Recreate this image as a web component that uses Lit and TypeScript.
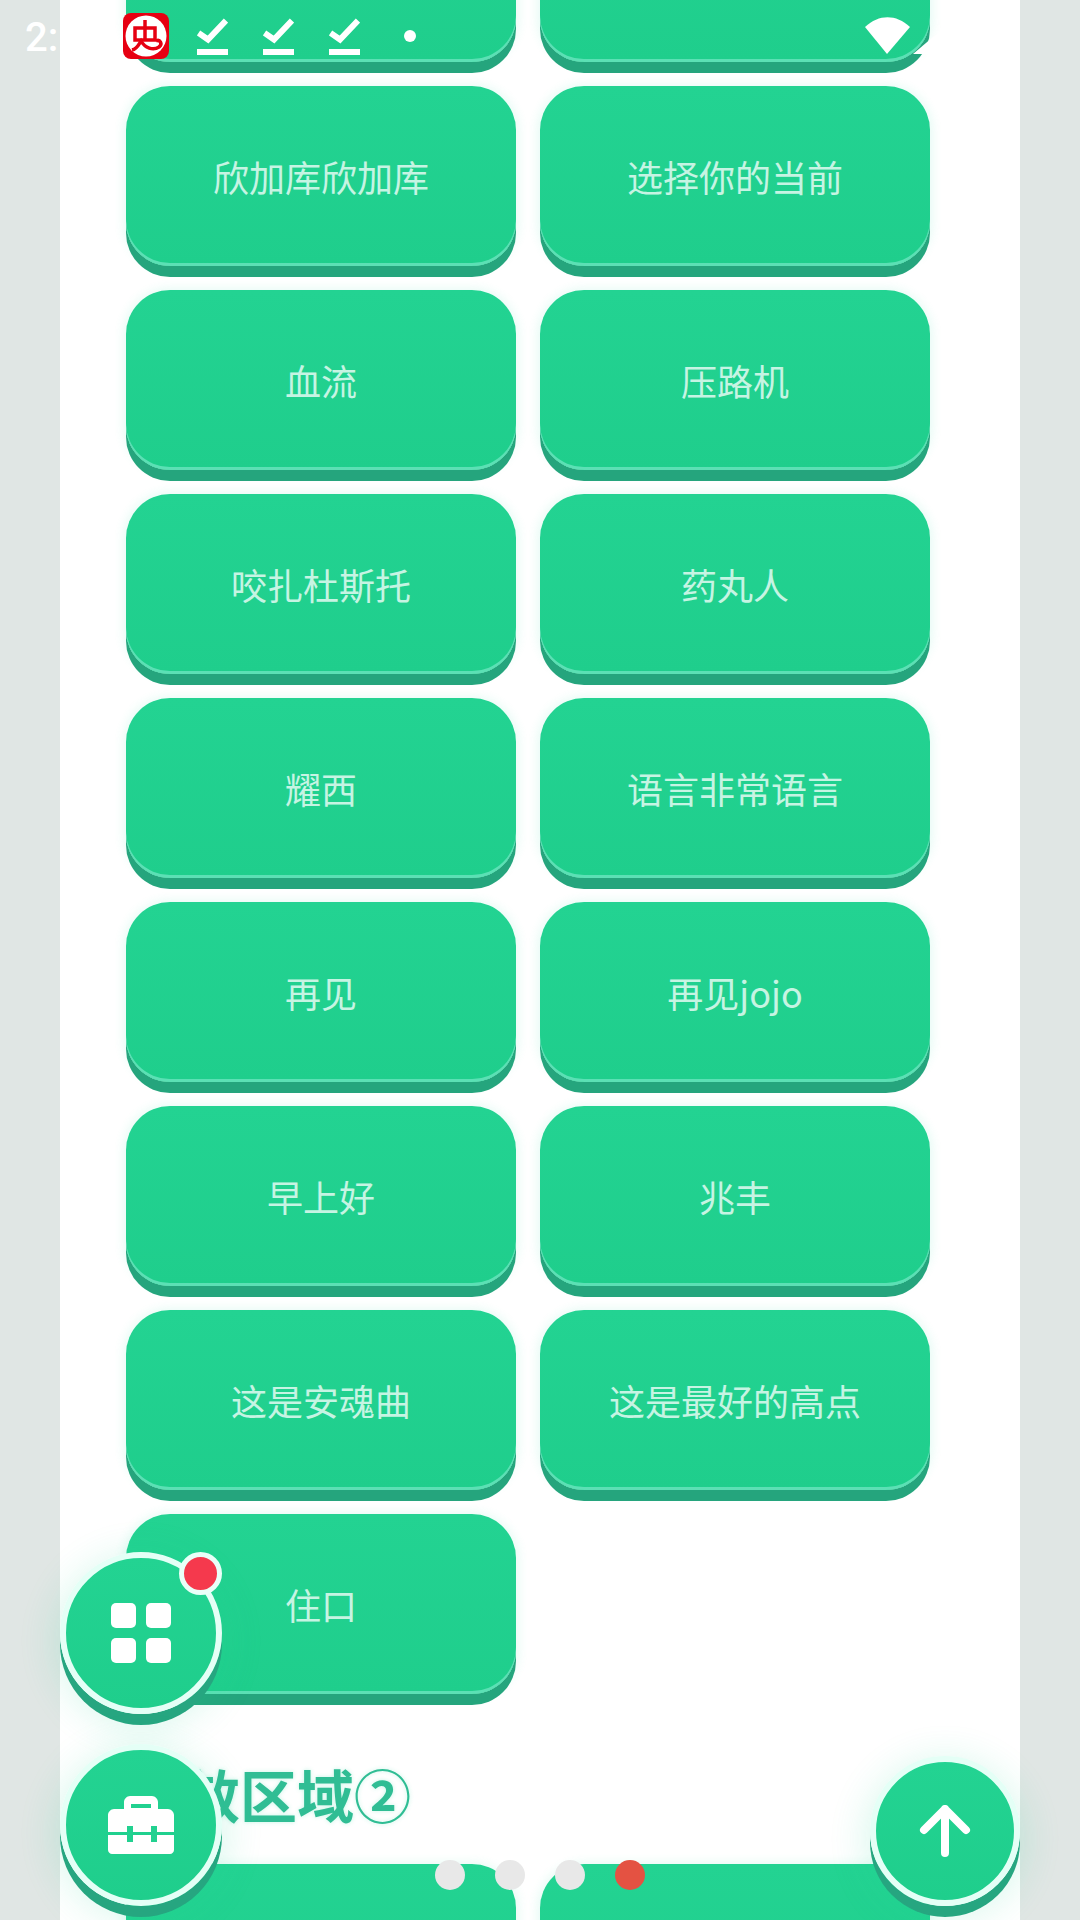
import { LitElement, html, css } from "lit";
import { customElement } from "lit/decorators.js";

const rowsA = [
  ["", ""],
  ["欣加库欣加库", "选择你的当前"],
  ["血流", "压路机"],
  ["咬扎杜斯托", "药丸人"],
  ["耀西", "语言非常语言"],
  ["再见", "再见jojo"],
  ["早上好", "兆丰"],
  ["这是安魂曲", "这是最好的高点"],
  ["住口"],
];

const check = html`<svg class="check" viewBox="0 0 31 37">
  <polyline points="1.5,15 11,21.5 29,2.5" fill="none" stroke="#fff" stroke-width="6"></polyline>
  <rect x="0" y="31" width="31" height="6" fill="#fff"></rect>
</svg>`;

@customElement("app-root")
export class AppRoot extends LitElement {
  static styles = css`
    :host {
      display: block;
      position: relative;
      width: 1080px;
      height: 1920px;
      overflow: hidden;
      background: #e0e6e4;
      font-family: "Noto Sans CJK SC", "Noto Sans", sans-serif;
    }
    .panel {
      width: 960px;
      height: 2200px;
      margin: -118px 0 0 60px;
      padding-left: 66px;
      box-sizing: border-box;
      background: #fff;
    }
    .grid {
      display: grid;
      grid-template-columns: 390px 390px;
      gap: 24px;
    }
    .card {
      height: 180px;
      border-radius: 44px;
      background: linear-gradient(#23d392, #1fce8c);
      box-shadow: 0 11px 0 #25a57d, inset 0 -3px 0 #5ce0b5, 0 1px 10px 3px rgba(60, 220, 170, 0.12);
      display: flex;
      align-items: center;
      justify-content: center;
      color: #c6f4e3;
      font-size: 36px;
      line-height: 1;
      box-sizing: border-box;
    }
    h2 {
      margin: 59px 0 31px;
      height: 80px;
      font-size: 57px;
      line-height: 80px;
      font-weight: 700;
      color: #30bd94;
      text-shadow: 0 0 4px rgba(60, 220, 170, 0.3);
    }
    .status {
      position: absolute;
      top: 0;
      left: 0;
      width: 1080px;
      height: 72px;
      display: flex;
      align-items: center;
      color: #fff;
      box-sizing: border-box;
      padding-left: 25px;
    }
    .time {
      width: 98px;
      font-family: Roboto, sans-serif;
      font-size: 40px;
      font-weight: 500;
      line-height: 1;
      padding-top: 3px;
    }
    .logo {
      width: 46px;
      height: 46px;
      margin-right: 28px;
    }
    .check {
      width: 31px;
      height: 37px;
      margin-right: 35px;
      flex: none;
    }
    .dot {
      width: 12px;
      height: 12px;
      border-radius: 50%;
      background: #fff;
      margin-left: 9px;
    }
    .net {
      width: 95px;
      height: 44px;
      margin-left: 449px;
    }
    .fab {
      position: absolute;
      width: 150px;
      height: 150px;
      border: 6px solid #e4fff6;
      border-radius: 50%;
      background: linear-gradient(#23d392, #1fce8c);
      box-shadow: 0 11px 0 #26a680, 0 8px 36px 6px rgba(40, 210, 150, 0.16);
      display: flex;
      align-items: center;
      justify-content: center;
    }
    .fab-grid { left: 60px; top: 1552px; }
    .fab-tool { left: 60px; top: 1744px; }
    .fab-up { left: 870px; top: 1756px; width: 138px; height: 138px; }
    .tiles {
      display: grid;
      grid-template-columns: 25px 25px;
      grid-auto-rows: 25px;
      gap: 10px;
    }
    .tiles span {
      background: #fff;
      border-radius: 5px;
    }
    .badge {
      position: absolute;
      left: 179px;
      top: 1552px;
      width: 33px;
      height: 33px;
      border: 5px solid #e9fff8;
      border-radius: 50%;
      background: #f5394d;
    }
    .tool-icon { width: 66px; height: 58px; }
    .up-icon { width: 52px; height: 52px; }
    .dots {
      position: absolute;
      left: 435px;
      top: 1860px;
      display: flex;
      gap: 30px;
    }
    .dots span {
      width: 30px;
      height: 30px;
      border-radius: 50%;
      background: #e8e8e8;
    }
    .dots .on { background: #e45242; }
  `;

  render() {
    return html`
      <div class="panel">
        <div class="grid">
          ${rowsA.flat().map((t) => html`<div class="card">${t}</div>`)}
        </div>
        <h2>音效区域②</h2>
        <div class="grid">
          <div class="card"></div>
          <div class="card"></div>
        </div>
      </div>

      <div class="status">
        <div class="time">2:</div>
        <svg class="logo" viewBox="0 0 46 46">
          <rect width="46" height="46" rx="8" fill="#e60012"></rect>
          <circle cx="23" cy="23" r="20.5" fill="#fff"></circle>
          <g fill="none" stroke="#e60012" stroke-width="3.5">
            <path d="M12 15H32V27H12Z"></path>
            <path d="M22 7V28"></path>
            <path d="M9 37C14 36 16 31 18 28C22 35 30 38 36 34C40 31 37 26 33 28"></path>
          </g>
        </svg>
        ${check}${check}${check}
        <div class="dot"></div>
        <svg class="net" viewBox="0 0 95 44">
          <path d="M22 40L0 13C14 0 31 0 45 13Z" fill="#fff"></path>
          <path d="M48 40H95V0Z" fill="#fff"></path>
        </svg>
      </div>

      <div class="fab fab-grid">
        <div class="tiles"><span></span><span></span><span></span><span></span></div>
      </div>
      <div class="badge"></div>

      <div class="fab fab-tool">
        <svg class="tool-icon" viewBox="0 0 66 58">
          <path fill="#fff" fill-rule="evenodd" d="M22 0H44C47 0 50 3 50 6V13H60C63 13 66 16 66 19V36H0V19C0 16 3 13 6 13H16V6C16 3 19 0 22 0ZM23 8V12H43V8Z"></path>
          <path fill="#fff" d="M0 39H66V54C66 56 64 58 62 58H4C2 58 0 56 0 54Z"></path>
          <rect x="19" y="30" width="6" height="16" fill="#22d190"></rect>
          <rect x="43" y="30" width="6" height="16" fill="#22d190"></rect>
        </svg>
      </div>

      <div class="fab fab-up">
        <svg class="up-icon" viewBox="0 0 52 52">
          <path d="M26 4V48M5 25L26 4L47 25" fill="none" stroke="#fff" stroke-width="8" stroke-linecap="round" stroke-linejoin="round"></path>
        </svg>
      </div>

      <div class="dots"><span></span><span></span><span></span><span class="on"></span></div>
    `;
  }
}
